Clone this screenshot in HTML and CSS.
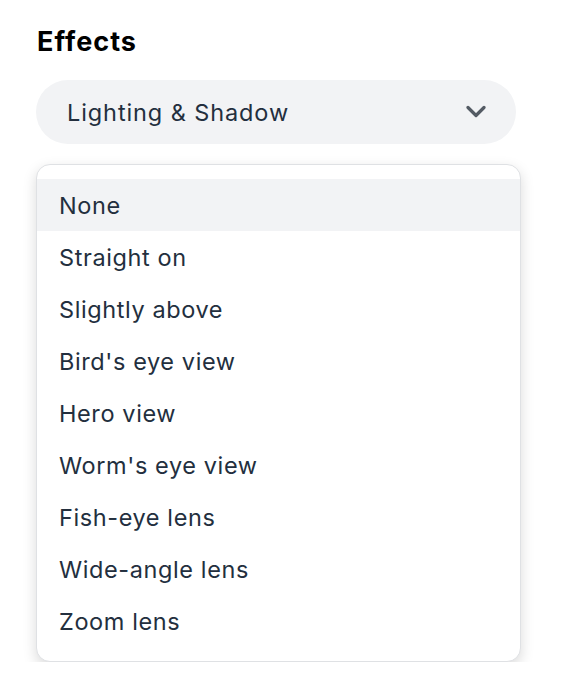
FILE: index.html
```html
<!DOCTYPE html>
<html lang="en">
<head>
<meta charset="utf-8">
<link rel="stylesheet" href="styles.css">
</head>
<body>
<div class="panel">
  <h2 class="title">Effects</h2>
  <div class="select">
    <span class="select-value">Lighting &amp; Shadow</span>
    <svg class="chevron" width="20" height="14" viewBox="0 0 20 14"><path d="M2 2.5 L10 10.5 L18 2.5" fill="none" stroke="#545b64" stroke-width="3.2" stroke-linecap="round" stroke-linejoin="round"/></svg>
  </div>
  <ul class="menu">
    <li class="item active">None</li>
    <li class="item">Straight on</li>
    <li class="item">Slightly above</li>
    <li class="item">Bird's eye view</li>
    <li class="item">Hero view</li>
    <li class="item">Worm's eye view</li>
    <li class="item">Fish-eye lens</li>
    <li class="item">Wide-angle lens</li>
    <li class="item">Zoom lens</li>
  </ul>
</div>
</body>
</html>
```

FILE: styles.css
```css
* { box-sizing: border-box; }
html, body { margin: 0; padding: 0; background: #ffffff; }
body {
  font-family: Inter, Roboto, "Liberation Sans", sans-serif;
  color: #232f3e;
}
.panel {
  padding: 22px 0 0 36px;
  width: 521px;
}
.title {
  margin: 0;
  font-size: 27px;
  line-height: 40px;
  font-weight: 700;
  color: #000000;
  padding-left: 1px;
  letter-spacing: 1px;
}
.select {
  margin-top: 18px;
  width: 480px;
  height: 64px;
  border-radius: 32px;
  background: #f2f3f5;
  display: flex;
  align-items: center;
  justify-content: space-between;
  padding: 0 30px 0 31px;
}
.select-value {
  font-size: 23.5px;
  letter-spacing: 0.9px;
  color: #232f3e;
}
.chevron { display: block; }
.menu {
  list-style: none;
  margin: 20px 0 0 0;
  padding: 14px 0;
  width: 485px;
  border: 1px solid #dfe1e4;
  border-radius: 14px;
  background: #ffffff;
  box-shadow: 0 5px 14px rgba(0, 0, 0, 0.15);
  overflow: hidden;
}
.item {
  height: 52px;
  display: flex;
  align-items: center;
  padding-left: 22px;
  font-size: 23.5px;
  letter-spacing: 0.6px;
  color: #232f3e;
}
.item.active { background: #f2f3f5; }
```
